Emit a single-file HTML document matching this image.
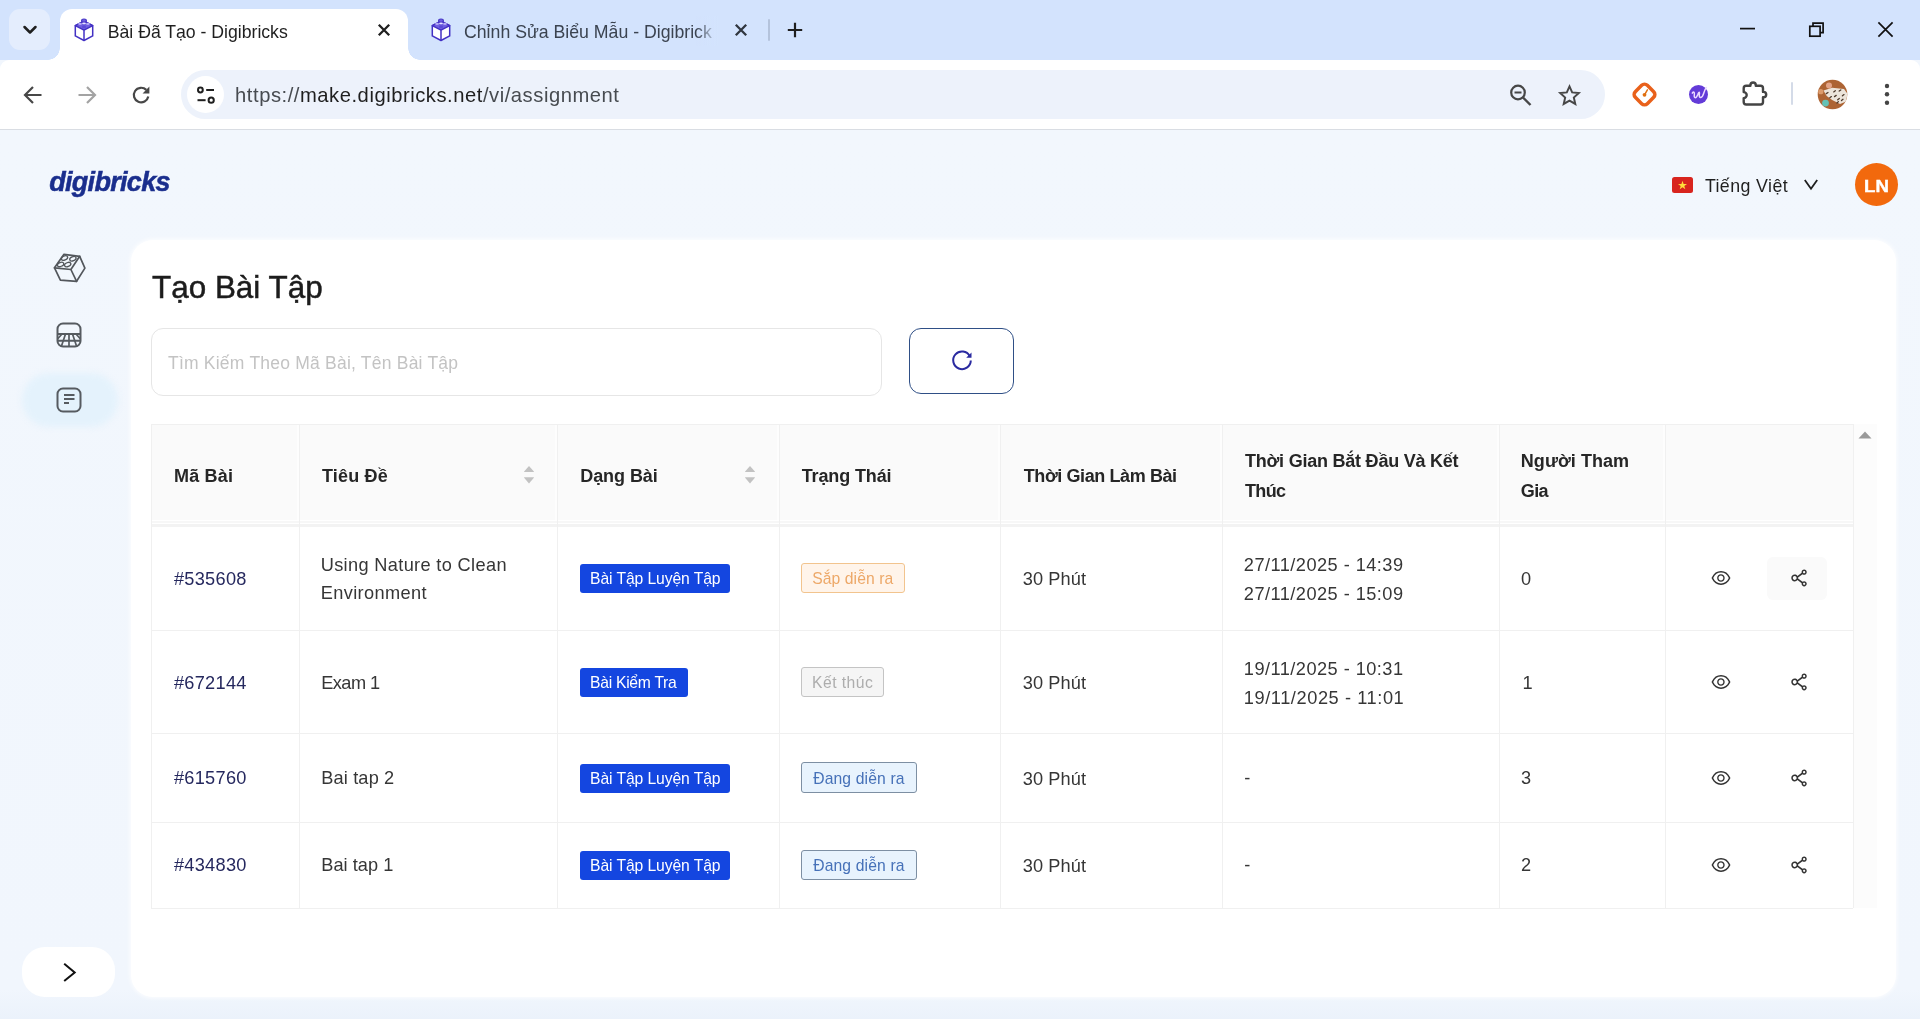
<!DOCTYPE html>
<html lang="vi">
<head>
<meta charset="utf-8">
<title>Bài Đã Tạo - Digibricks</title>
<style>
*{box-sizing:border-box;margin:0;padding:0}
html,body{width:1920px;height:1019px;overflow:hidden}
body{font-family:"Liberation Sans",sans-serif;background:#f1f6fd;position:relative;color:#333}
.abs{position:absolute}
.t{position:absolute;white-space:nowrap}
#texts{position:absolute;left:0;top:0;width:1920px;height:1019px;will-change:transform}
#tabstrip{position:absolute;left:0;top:0;width:1920px;height:60px;background:#d3e3fd}
#tabdrop{position:absolute;left:9px;top:9px;width:41px;height:41px;border-radius:11px;background:#e4edfd}
#tab1{position:absolute;left:60px;top:9px;width:348px;height:51px;background:#fff;border-radius:12px 12px 0 0}
#tab1:before,#tab1:after{content:"";position:absolute;bottom:0;width:12px;height:12px;background:radial-gradient(circle at 0 0,rgba(255,255,255,0) 11.5px,#fff 12px)}
#tab1:before{left:-12px}
#tab1:after{right:-12px;background:radial-gradient(circle at 100% 0,rgba(255,255,255,0) 11.5px,#fff 12px)}
#toolbar{position:absolute;left:0;top:60px;width:1920px;height:69px;background:#fff;border-radius:9px 9px 0 0}
#tbline{position:absolute;left:0;top:129px;width:1920px;height:1px;background:#d9dde3}
#urlbar{position:absolute;left:181px;top:70px;width:1424px;height:49px;border-radius:25px;background:#edf2fb}
#urlchip{position:absolute;left:187px;top:76px;width:37px;height:37px;border-radius:19px;background:#fff}
#page{position:absolute;left:0;top:130px;width:1920px;height:889px;background:linear-gradient(180deg,#f2f7fd 0,#f1f6fd 860px,#ebf2fb 889px)}
#avatar{position:absolute;left:1855px;top:163px;width:43px;height:43px;border-radius:22px;background:#f2690d}
#card{position:absolute;left:131px;top:240px;width:1765px;height:757px;background:#fff;border-radius:22px;box-shadow:0 0 4px 1px rgba(255,255,255,0.85)}
#search{position:absolute;left:151px;top:328px;width:731px;height:68px;border:1px solid #e6e6e6;border-radius:12px;background:#fff}
#refresh{position:absolute;left:909px;top:328px;width:105px;height:66px;border:1px solid #2f4f86;border-radius:12px;background:#fff}
#navactive{position:absolute;left:22px;top:373px;width:96px;height:54px;border-radius:27px;background:#e4f2fc;filter:blur(3px)}
#collapse{position:absolute;left:22px;top:946.5px;width:92.5px;height:50.7px;border-radius:23px;background:#fff}
#tbl{position:absolute;left:151px;top:424px;width:1702px;height:484px;background:#fff}
.hdr{position:absolute;left:0;top:0;width:1702px;height:96px;background:#fafafa}
.hb1{position:absolute;left:0;top:97px;width:1702px;height:2px;background:#f7f7f7}
.hb2{position:absolute;left:0;top:100px;width:1702px;height:3px;background:#f3f3f3}
.vl{position:absolute;top:0;width:1px;height:484px;background:#f0f0f0}
.hl{position:absolute;left:0;width:1702px;height:1px;background:#f0f0f0}
.th{font-weight:bold;font-size:17.7px;line-height:30px;color:#262626}
.td{font-size:18.2px;line-height:30px;color:#363636}
.code{color:#25285e}
.tagb{position:absolute;height:29px;border-radius:3px;background:#1446e0}
.tago{position:absolute;height:30px;border-radius:3px;border:1px solid}
.tagt{font-size:15.7px;line-height:20px}
.to{background:#fff4ea;border-color:#f2c48e}
.tg{background:#f5f5f5;border-color:#c4c4c4}
.tb{background:#e8f3fd;border-color:#7d8fa3}
.ic{position:absolute}
#sbtrack{position:absolute;left:1854px;top:424px;width:23px;height:484px;background:#fcfcfc}
</style>
</head>
<body>
<!-- backgrounds & table -->
<div id="tabstrip"></div><div id="tabdrop"></div><div id="tab1"></div>
<div id="toolbar"></div><div id="tbline"></div><div id="urlbar"></div><div id="urlchip"></div>
<div id="page"></div><div id="avatar"></div><div id="navactive"></div><div id="card"></div>
<div id="search"></div><div id="refresh"></div><div id="collapse"></div>
<div id="sbtrack"></div>
<svg class="abs" style="left:1858px;top:430px" width="14" height="10" viewBox="0 0 14 10"><path d="M7 1.500 L13.500 8.500 L0.500 8.500 Z" fill="#9a9a9a"/></svg>
<div id="tbl">
<div class="hdr"></div><div class="hb1"></div><div class="hb2"></div>
<div class="vl" style="left:0px"></div>
<div class="vl" style="left:148px"></div>
<div class="vl" style="left:406px"></div>
<div class="vl" style="left:628px"></div>
<div class="vl" style="left:849px"></div>
<div class="vl" style="left:1071px"></div>
<div class="vl" style="left:1348px"></div>
<div class="vl" style="left:1514px"></div>
<div class="vl" style="left:1702px"></div>
<div class="abs" style="left:146px;top:1px;width:2px;height:95px;background:#fdfdfd"></div>
<div class="abs" style="left:404px;top:1px;width:2px;height:95px;background:#fdfdfd"></div>
<div class="abs" style="left:626px;top:1px;width:2px;height:95px;background:#fdfdfd"></div>
<div class="abs" style="left:847px;top:1px;width:2px;height:95px;background:#fdfdfd"></div>
<div class="abs" style="left:1069px;top:1px;width:2px;height:95px;background:#fdfdfd"></div>
<div class="abs" style="left:1346px;top:1px;width:2px;height:95px;background:#fdfdfd"></div>
<div class="abs" style="left:1512px;top:1px;width:2px;height:95px;background:#fdfdfd"></div>
<div class="hl" style="top:0px"></div>
<div class="hl" style="top:206px"></div>
<div class="hl" style="top:309px"></div>
<div class="hl" style="top:398px"></div>
<div class="hl" style="top:484px"></div>
<svg class="ic" style="left:371.5px;top:40px" width="12" height="22" viewBox="0 0 12 22"><path d="M6 2 L10.900 7.500 Q11.200 8.100 10.500 8.100 L1.500 8.100 Q0.800 8.100 1.100 7.500 Z" fill="#c2c2c2"/><path d="M6 19.400 L10.900 13.800 Q11.200 13.200 10.500 13.200 L1.500 13.200 Q0.800 13.200 1.100 13.800 Z" fill="#c2c2c2"/></svg>
<svg class="ic" style="left:592.5px;top:40px" width="12" height="22" viewBox="0 0 12 22"><path d="M6 2 L10.900 7.500 Q11.200 8.100 10.500 8.100 L1.500 8.100 Q0.800 8.100 1.100 7.500 Z" fill="#c2c2c2"/><path d="M6 19.400 L10.900 13.800 Q11.200 13.200 10.500 13.200 L1.500 13.200 Q0.800 13.200 1.100 13.800 Z" fill="#c2c2c2"/></svg>
<div class="tagb" style="left:429px;top:140px;width:150px;height:29px"></div>
<div class="tagb" style="left:429px;top:244px;width:108px;height:28.5px"></div>
<div class="tagb" style="left:429px;top:340px;width:150px;height:28.5px"></div>
<div class="tagb" style="left:429px;top:427px;width:150px;height:28.700000000000045px"></div>
<div class="tago to" style="left:650px;top:139px;width:104px;height:30px"></div>
<div class="tago tg" style="left:650px;top:243px;width:83px;height:30px"></div>
<div class="tago tb" style="left:650px;top:338px;width:116px;height:30.5px"></div>
<div class="tago tb" style="left:650px;top:426px;width:116px;height:30px"></div>
<div class="abs" style="left:1616px;top:133px;width:60px;height:43px;border-radius:6px;background:#fafafa"></div>
<svg class="ic" style="left:1558.6px;top:143.20000000000005px" width="22" height="22" viewBox="0 0 1024 1024" fill="#333"><path d="M942.2 486.2C847.4 286.5 704.1 186 512 186c-192.2 0-335.4 100.5-430.2 300.3a60.3 60.3 0 000 51.5C176.6 737.5 319.9 838 512 838c192.2 0 335.400-100.500 430.200-300.300 7.700-16.200 7.700-35 0-51.500zM512 766c-161.300 0-279.400-81.800-362.700-254C232.600 339.800 350.700 258 512 258c161.300 0 279.400 81.800 362.700 254C791.500 684.200 673.400 766 512 766zm-4-430c-97.200 0-176 78.800-176 176s78.800 176 176 176 176-78.800 176-176-78.800-176-176-176zm0 288c-61.900 0-112-50.100-112-112s50.100-112 112-112 112 50.100 112 112-50.100 112-112 112z"/></svg>
<svg class="ic" style="left:1636.6px;top:143.20000000000005px" width="22" height="22" viewBox="0 0 1024 1024" fill="#333"><path d="M752 664c-28.500 0-54.800 10-75.400 26.700L469.400 540.800a160.680 160.680 0 000-57.600l207.200-149.900C697.200 350 723.500 360 752 360c66.200 0 120-53.800 120-120s-53.800-120-120-120-120 53.800-120 120c0 11.600 1.600 22.700 4.700 33.300L439.900 415.800C410.700 377.100 364.300 352 312 352c-88.400 0-160 71.600-160 160s71.600 160 160 160c52.300 0 98.700-25.100 127.900-63.800l196.800 142.500c-3.100 10.600-4.700 21.800-4.700 33.300 0 66.200 53.800 120 120 120s120-53.800 120-120-53.800-120-120-120zm0-476c28.700 0 52 23.300 52 52s-23.300 52-52 52-52-23.300-52-52 23.300-52 52-52zM312 600c-48.500 0-88-39.500-88-88s39.500-88 88-88 88 39.500 88 88-39.500 88-88 88zm440 236c-28.700 0-52-23.300-52-52s23.300-52 52-52 52 23.300 52 52-23.300 52-52 52z"/></svg>
<svg class="ic" style="left:1558.6px;top:247.20000000000005px" width="22" height="22" viewBox="0 0 1024 1024" fill="#333"><path d="M942.2 486.2C847.4 286.5 704.1 186 512 186c-192.2 0-335.4 100.5-430.2 300.3a60.3 60.3 0 000 51.5C176.6 737.5 319.9 838 512 838c192.2 0 335.400-100.500 430.200-300.300 7.700-16.200 7.700-35 0-51.500zM512 766c-161.300 0-279.400-81.800-362.700-254C232.600 339.800 350.700 258 512 258c161.300 0 279.400 81.800 362.700 254C791.500 684.200 673.400 766 512 766zm-4-430c-97.200 0-176 78.800-176 176s78.800 176 176 176 176-78.800 176-176-78.800-176-176-176zm0 288c-61.900 0-112-50.100-112-112s50.100-112 112-112 112 50.100 112 112-50.100 112-112 112z"/></svg>
<svg class="ic" style="left:1636.6px;top:247.20000000000005px" width="22" height="22" viewBox="0 0 1024 1024" fill="#333"><path d="M752 664c-28.500 0-54.800 10-75.400 26.700L469.400 540.800a160.680 160.680 0 000-57.600l207.200-149.900C697.200 350 723.500 360 752 360c66.200 0 120-53.800 120-120s-53.800-120-120-120-120 53.800-120 120c0 11.600 1.600 22.700 4.700 33.300L439.900 415.800C410.700 377.100 364.300 352 312 352c-88.400 0-160 71.600-160 160s71.600 160 160 160c52.300 0 98.700-25.100 127.900-63.800l196.800 142.500c-3.100 10.600-4.700 21.800-4.700 33.300 0 66.200 53.800 120 120 120s120-53.800 120-120-53.800-120-120-120zm0-476c28.700 0 52 23.300 52 52s-23.300 52-52 52-52-23.300-52-52 23.300-52 52-52zM312 600c-48.500 0-88-39.500-88-88s39.500-88 88-88 88 39.500 88 88-39.500 88-88 88zm440 236c-28.700 0-52-23.300-52-52s23.300-52 52-52 52 23.300 52 52-23.300 52-52 52z"/></svg>
<svg class="ic" style="left:1558.6px;top:342.70000000000005px" width="22" height="22" viewBox="0 0 1024 1024" fill="#333"><path d="M942.2 486.2C847.4 286.5 704.1 186 512 186c-192.2 0-335.4 100.5-430.2 300.3a60.3 60.3 0 000 51.5C176.6 737.5 319.9 838 512 838c192.2 0 335.400-100.500 430.200-300.300 7.700-16.200 7.700-35 0-51.500zM512 766c-161.300 0-279.400-81.800-362.700-254C232.600 339.800 350.700 258 512 258c161.300 0 279.400 81.800 362.700 254C791.500 684.200 673.400 766 512 766zm-4-430c-97.200 0-176 78.800-176 176s78.800 176 176 176 176-78.800 176-176-78.800-176-176-176zm0 288c-61.900 0-112-50.100-112-112s50.100-112 112-112 112 50.100 112 112-50.100 112-112 112z"/></svg>
<svg class="ic" style="left:1636.6px;top:342.70000000000005px" width="22" height="22" viewBox="0 0 1024 1024" fill="#333"><path d="M752 664c-28.500 0-54.800 10-75.400 26.700L469.400 540.800a160.680 160.680 0 000-57.600l207.200-149.900C697.200 350 723.500 360 752 360c66.200 0 120-53.800 120-120s-53.800-120-120-120-120 53.800-120 120c0 11.600 1.600 22.700 4.700 33.300L439.900 415.800C410.700 377.100 364.300 352 312 352c-88.400 0-160 71.600-160 160s71.600 160 160 160c52.300 0 98.700-25.100 127.900-63.800l196.800 142.500c-3.100 10.600-4.700 21.800-4.700 33.300 0 66.200 53.800 120 120 120s120-53.800 120-120-53.800-120-120-120zm0-476c28.700 0 52 23.300 52 52s-23.300 52-52 52-52-23.300-52-52 23.300-52 52-52zM312 600c-48.500 0-88-39.500-88-88s39.500-88 88-88 88 39.500 88 88-39.500 88-88 88zm440 236c-28.700 0-52-23.300-52-52s23.300-52 52-52 52 23.300 52 52-23.300 52-52 52z"/></svg>
<svg class="ic" style="left:1558.6px;top:430px" width="22" height="22" viewBox="0 0 1024 1024" fill="#333"><path d="M942.2 486.2C847.4 286.5 704.1 186 512 186c-192.2 0-335.4 100.5-430.2 300.3a60.3 60.3 0 000 51.5C176.6 737.5 319.9 838 512 838c192.2 0 335.400-100.500 430.200-300.300 7.700-16.200 7.700-35 0-51.500zM512 766c-161.300 0-279.400-81.800-362.700-254C232.600 339.800 350.700 258 512 258c161.300 0 279.400 81.800 362.700 254C791.500 684.200 673.400 766 512 766zm-4-430c-97.200 0-176 78.800-176 176s78.800 176 176 176 176-78.800 176-176-78.800-176-176-176zm0 288c-61.900 0-112-50.100-112-112s50.100-112 112-112 112 50.100 112 112-50.100 112-112 112z"/></svg>
<svg class="ic" style="left:1636.6px;top:430px" width="22" height="22" viewBox="0 0 1024 1024" fill="#333"><path d="M752 664c-28.500 0-54.800 10-75.400 26.700L469.400 540.800a160.680 160.680 0 000-57.600l207.200-149.900C697.200 350 723.500 360 752 360c66.200 0 120-53.800 120-120s-53.800-120-120-120-120 53.800-120 120c0 11.600 1.600 22.700 4.700 33.300L439.900 415.800C410.700 377.100 364.300 352 312 352c-88.400 0-160 71.600-160 160s71.600 160 160 160c52.300 0 98.700-25.100 127.900-63.800l196.800 142.500c-3.100 10.600-4.700 21.800-4.700 33.300 0 66.200 53.800 120 120 120s120-53.800 120-120-53.800-120-120-120zm0-476c28.700 0 52 23.300 52 52s-23.300 52-52 52-52-23.300-52-52 23.300-52 52-52zM312 600c-48.500 0-88-39.500-88-88s39.500-88 88-88 88 39.500 88 88-39.500 88-88 88zm440 236c-28.700 0-52-23.300-52-52s23.300-52 52-52 52 23.300 52 52-23.300 52-52 52z"/></svg>
</div>
<!-- texts -->
<div id="texts">
<div class="t" style="left:107.75px;top:16.87px;font-size:17.7px;line-height:30px;letter-spacing:-0.023px;color:#1f1f1f">Bài Đã Tạo - Digibricks</div>
<div class="t" style="left:464.00px;top:16.87px;font-size:17.7px;line-height:30px;letter-spacing:0.000px;color:#3b4350">Chỉnh Sửa Biểu Mẫu - Digibrick</div>
<div class="t" style="left:235.10px;top:80.00px;font-size:20.2px;line-height:30px;letter-spacing:0.535px;color:#1f1f1f"><span style="color:#474b50">https://</span>make.digibricks.net<span style="color:#474b50">/vi/assignment</span></div>
<div class="t" style="left:49.20px;top:167.44px;font-size:27px;line-height:30px;letter-spacing:-0.689px;font-weight:bold;font-style:italic;color:#1a2e8d;-webkit-text-stroke:0.5px #1a2e8d">digibricks</div>
<div class="t" style="left:1704.90px;top:170.63px;font-size:17.8px;line-height:30px;letter-spacing:0.411px;color:#1f1f1f">Tiếng Việt</div>
<div class="t" style="left:1864.37px;top:170.78px;font-size:16.5px;line-height:30px;letter-spacing:0.000px;font-weight:bold;color:#fff;-webkit-text-stroke:0.4px #fff;transform-origin:0 50%;transform:scaleX(1.1300)">LN</div>
<div class="t" style="left:152.00px;top:272.87px;font-size:31.4px;line-height:30px;letter-spacing:0.025px;color:#1c1c1c;-webkit-text-stroke:0.5px #1c1c1c">Tạo Bài Tập</div>
<div class="t" style="left:168.00px;top:347.69px;font-size:17.5px;line-height:30px;letter-spacing:0.219px;color:#c3c3c3">Tìm Kiếm Theo Mã Bài, Tên Bài Tập</div>
<div class="t" style="left:174.00px;top:460.66px;font-size:18px;line-height:30px;letter-spacing:0.200px;font-weight:bold;color:#262626">Mã Bài</div>
<div class="t" style="left:322.00px;top:460.66px;font-size:18px;line-height:30px;letter-spacing:0.167px;font-weight:bold;color:#262626">Tiêu Đề</div>
<div class="t" style="left:580.25px;top:460.66px;font-size:18px;line-height:30px;letter-spacing:-0.071px;font-weight:bold;color:#262626">Dạng Bài</div>
<div class="t" style="left:801.75px;top:460.66px;font-size:18px;line-height:30px;letter-spacing:-0.139px;font-weight:bold;color:#262626">Trạng Thái</div>
<div class="t" style="left:1023.75px;top:460.66px;font-size:18px;line-height:30px;letter-spacing:-0.406px;font-weight:bold;color:#262626">Thời Gian Làm Bài</div>
<div class="t" style="left:1245.00px;top:445.51px;font-size:18px;line-height:30px;letter-spacing:-0.228px;font-weight:bold;color:#262626">Thời Gian Bắt Đầu Và Kết</div>
<div class="t" style="left:1245.00px;top:475.51px;font-size:18px;line-height:30px;letter-spacing:-0.667px;font-weight:bold;color:#262626">Thúc</div>
<div class="t" style="left:1520.80px;top:445.51px;font-size:18px;line-height:30px;letter-spacing:0.044px;font-weight:bold;color:#262626">Người Tham</div>
<div class="t" style="left:1520.80px;top:475.51px;font-size:18px;line-height:30px;letter-spacing:-0.650px;font-weight:bold;color:#262626">Gia</div>
<div class="t" style="left:173.90px;top:563.89px;font-size:18.2px;line-height:30px;letter-spacing:0.283px;color:#25285e">#535608</div>
<div class="t" style="left:320.70px;top:549.79px;font-size:18.2px;line-height:30px;letter-spacing:0.345px;color:#363636">Using Nature to Clean</div>
<div class="t" style="left:320.70px;top:578.29px;font-size:18.2px;line-height:30px;letter-spacing:0.380px;color:#363636">Environment</div>
<div class="t" style="left:590.00px;top:564.36px;font-size:15.7px;line-height:30px;letter-spacing:-0.087px;color:#fff">Bài Tập Luyện Tập</div>
<div class="t" style="left:812.20px;top:564.36px;font-size:15.7px;line-height:30px;letter-spacing:0.080px;color:#eda868">Sắp diễn ra</div>
<div class="t" style="left:1022.70px;top:564.19px;font-size:18.2px;line-height:30px;letter-spacing:0.117px;color:#363636">30 Phút</div>
<div class="t" style="left:1243.80px;top:549.89px;font-size:18.2px;line-height:30px;letter-spacing:0.465px;color:#363636">27/11/2025 - 14:39</div>
<div class="t" style="left:1243.80px;top:578.89px;font-size:18.2px;line-height:30px;letter-spacing:0.465px;color:#363636">27/11/2025 - 15:09</div>
<div class="t" style="left:1521.00px;top:563.89px;font-size:18.2px;line-height:30px;letter-spacing:0.000px;color:#363636">0</div>
<div class="t" style="left:173.90px;top:667.59px;font-size:18.2px;line-height:30px;letter-spacing:0.283px;color:#25285e">#672144</div>
<div class="t" style="left:321.30px;top:667.59px;font-size:18.2px;line-height:30px;letter-spacing:-0.580px;color:#363636">Exam 1</div>
<div class="t" style="left:590.00px;top:668.06px;font-size:15.7px;line-height:30px;letter-spacing:-0.273px;color:#fff">Bài Kiểm Tra</div>
<div class="t" style="left:812.00px;top:668.06px;font-size:15.7px;line-height:30px;letter-spacing:0.471px;color:#adadad">Kết thúc</div>
<div class="t" style="left:1022.70px;top:667.89px;font-size:18.2px;line-height:30px;letter-spacing:0.117px;color:#363636">30 Phút</div>
<div class="t" style="left:1243.80px;top:653.59px;font-size:18.2px;line-height:30px;letter-spacing:0.465px;color:#363636">19/11/2025 - 10:31</div>
<div class="t" style="left:1243.80px;top:682.59px;font-size:18.2px;line-height:30px;letter-spacing:0.582px;color:#363636">19/11/2025 - 11:01</div>
<div class="t" style="left:1522.50px;top:667.59px;font-size:18.2px;line-height:30px;letter-spacing:0.000px;color:#363636">1</div>
<div class="t" style="left:173.90px;top:763.49px;font-size:18.2px;line-height:30px;letter-spacing:0.283px;color:#25285e">#615760</div>
<div class="t" style="left:321.30px;top:763.49px;font-size:18.2px;line-height:30px;letter-spacing:0.137px;color:#363636">Bai tap 2</div>
<div class="t" style="left:590.00px;top:763.96px;font-size:15.7px;line-height:30px;letter-spacing:-0.087px;color:#fff">Bài Tập Luyện Tập</div>
<div class="t" style="left:813.20px;top:763.96px;font-size:15.7px;line-height:30px;letter-spacing:0.136px;color:#4671b8">Đang diễn ra</div>
<div class="t" style="left:1022.70px;top:763.79px;font-size:18.2px;line-height:30px;letter-spacing:0.117px;color:#363636">30 Phút</div>
<div class="t" style="left:1244.30px;top:763.49px;font-size:18.2px;line-height:30px;letter-spacing:0.000px;color:#363636">-</div>
<div class="t" style="left:1521.00px;top:763.49px;font-size:18.2px;line-height:30px;letter-spacing:0.000px;color:#363636">3</div>
<div class="t" style="left:173.90px;top:850.39px;font-size:18.2px;line-height:30px;letter-spacing:0.283px;color:#25285e">#434830</div>
<div class="t" style="left:321.30px;top:850.39px;font-size:18.2px;line-height:30px;letter-spacing:0.025px;color:#363636">Bai tap 1</div>
<div class="t" style="left:590.00px;top:850.86px;font-size:15.7px;line-height:30px;letter-spacing:-0.087px;color:#fff">Bài Tập Luyện Tập</div>
<div class="t" style="left:813.20px;top:850.86px;font-size:15.7px;line-height:30px;letter-spacing:0.136px;color:#4671b8">Đang diễn ra</div>
<div class="t" style="left:1022.70px;top:850.69px;font-size:18.2px;line-height:30px;letter-spacing:0.117px;color:#363636">30 Phút</div>
<div class="t" style="left:1244.30px;top:850.39px;font-size:18.2px;line-height:30px;letter-spacing:0.000px;color:#363636">-</div>
<div class="t" style="left:1521.00px;top:850.39px;font-size:18.2px;line-height:30px;letter-spacing:0.000px;color:#363636">2</div>
</div>
<!-- icons -->
<svg class="abs" style="left:22px;top:22px" width="16" height="16" viewBox="0 0 16 16"><path d="M2.500 5 L8 10.500 L13.500 5" stroke="#1f1f1f" stroke-width="2.500" fill="none" stroke-linecap="round" stroke-linejoin="round"/></svg>
<svg class="abs" style="left:72.2px;top:17px" width="24" height="26" viewBox="0 0 24 26"><path d="M12 4.200 L20.700 8.600 L20.700 18.900 L12 23.500 L3.300 18.900 L3.300 8.600 Z" fill="#fff" stroke="#4331c4" stroke-width="1.500" stroke-linejoin="round"/><path d="M3.300 8.600 L12 13.200 L20.700 8.600 L12 4.200 Z" fill="#6f5fe0" stroke="#4331c4" stroke-width="1.500" stroke-linejoin="round"/><path d="M12 13.200 L12 23.500" stroke="#4331c4" stroke-width="1.500"/><ellipse cx="12" cy="3.700" rx="2.400" ry="1.700" fill="#6f5fe0" stroke="#4331c4" stroke-width="1.100"/><ellipse cx="8" cy="6.900" rx="1.900" ry="1.100" fill="#b3a9f5"/><ellipse cx="16" cy="6.900" rx="1.900" ry="1.100" fill="#b3a9f5"/><ellipse cx="12" cy="6.300" rx="1.900" ry="0.900" fill="#e6e2ff"/><ellipse cx="12" cy="9.800" rx="2.100" ry="1.500" fill="#5a49d6"/></svg>
<svg class="abs" style="left:429.2px;top:17px" width="24" height="26" viewBox="0 0 24 26"><path d="M12 4.200 L20.700 8.600 L20.700 18.900 L12 23.500 L3.300 18.900 L3.300 8.600 Z" fill="#fff" stroke="#4331c4" stroke-width="1.500" stroke-linejoin="round"/><path d="M3.300 8.600 L12 13.200 L20.700 8.600 L12 4.200 Z" fill="#6f5fe0" stroke="#4331c4" stroke-width="1.500" stroke-linejoin="round"/><path d="M12 13.200 L12 23.500" stroke="#4331c4" stroke-width="1.500"/><ellipse cx="12" cy="3.700" rx="2.400" ry="1.700" fill="#6f5fe0" stroke="#4331c4" stroke-width="1.100"/><ellipse cx="8" cy="6.900" rx="1.900" ry="1.100" fill="#b3a9f5"/><ellipse cx="16" cy="6.900" rx="1.900" ry="1.100" fill="#b3a9f5"/><ellipse cx="12" cy="6.300" rx="1.900" ry="0.900" fill="#e6e2ff"/><ellipse cx="12" cy="9.800" rx="2.100" ry="1.500" fill="#5a49d6"/></svg>
<svg class="abs" style="left:375.9px;top:22.3px" width="16" height="16" viewBox="0 0 16 16"><path d="M2.8 2.8 L13.2 13.2 M13.2 2.8 L2.8 13.2" stroke="#1f1f1f" stroke-width="2.3" fill="none"/></svg>
<svg class="abs" style="left:733px;top:22.4px" width="16" height="16" viewBox="0 0 16 16"><path d="M2.8 2.8 L13.2 13.2 M13.2 2.8 L2.8 13.2" stroke="#30363f" stroke-width="2.3" fill="none"/></svg>
<div class="abs" style="left:696px;top:16px;width:22px;height:30px;background:linear-gradient(90deg,rgba(211,227,253,0),#d3e3fd)"></div>
<div class="abs" style="left:768px;top:19px;width:2px;height:22px;background:#b4c3dc;border-radius:1px"></div>
<svg class="abs" style="left:787px;top:22px" width="16" height="16" viewBox="0 0 16 16"><path d="M8 0.800 V15.200 M0.800 8 H15.200" stroke="#1f1f1f" stroke-width="2.200" fill="none"/></svg>
<svg class="abs" style="left:1738px;top:24px" width="20" height="10" viewBox="0 0 20 10"><path d="M2 4.600 H17" stroke="#111" stroke-width="1.700" fill="none"/></svg>
<svg class="abs" style="left:1808px;top:21px" width="17" height="17" viewBox="0 0 17 17"><rect x="1.800" y="5.300" width="10.300" height="9.900" fill="none" stroke="#111" stroke-width="1.700"/><path d="M5 5.300 V2.200 H15.100 V11.700 H12.100" fill="none" stroke="#111" stroke-width="1.700"/></svg>
<svg class="abs" style="left:1876px;top:20px" width="18" height="18" viewBox="0 0 18 18"><path d="M2.400 2.400 L16.600 16.600 M16.600 2.400 L2.400 16.600" stroke="#111" stroke-width="1.700" fill="none"/></svg>
<svg class="abs" style="left:23.200000000000003px;top:85px" width="20" height="20" viewBox="0 0 20 20"><g ><path d="M18.500 10 H2.500 M10 2 L2 10 L10 18" stroke="#474747" stroke-width="2.200" fill="none" stroke-linejoin="miter"/></g></svg>
<svg class="abs" style="left:76.8px;top:85px" width="20" height="20" viewBox="0 0 20 20"><g transform="translate(20 0) scale(-1 1)"><path d="M18.500 10 H2.500 M10 2 L2 10 L10 18" stroke="#a3a3a3" stroke-width="2.200" fill="none" stroke-linejoin="miter"/></g></svg>
<svg class="abs" style="left:131px;top:85px" width="20" height="20" viewBox="0 0 20 20"><path d="M17.300 11.500 A7.300 7.300 0 1 1 15.300 4.900" stroke="#474747" stroke-width="2.200" fill="none"/><path d="M18.400 1.600 V8.400 H11.600 Z" fill="#474747"/></svg>
<svg class="abs" style="left:195px;top:85px" width="22" height="20" viewBox="0 0 22 20"><circle cx="5.400" cy="5" r="2.400" fill="none" stroke="#1f1f1f" stroke-width="2"/><path d="M11.200 5 H19" stroke="#1f1f1f" stroke-width="2"/><circle cx="16.200" cy="15.200" r="2.600" fill="none" stroke="#1f1f1f" stroke-width="2"/><path d="M2.500 15.200 H10.600" stroke="#1f1f1f" stroke-width="2"/></svg>
<svg class="abs" style="left:1508px;top:83px" width="24" height="24" viewBox="0 0 24 24"><circle cx="10" cy="9.500" r="6.800" fill="none" stroke="#474747" stroke-width="2.200"/><path d="M15 14.500 L22.500 22" stroke="#474747" stroke-width="2.400"/><path d="M6.500 9.500 H13.500" stroke="#474747" stroke-width="2"/></svg>
<svg class="abs" style="left:1557px;top:82.6px" width="25" height="24" viewBox="0 0 25 24"><path transform="translate(12.500 12.300) scale(0.920) translate(-12.500 -12.300)" d="M12.500 2.600 L15.400 9.200 L22.600 9.900 L17.200 14.700 L18.800 21.700 L12.500 18 L6.200 21.700 L7.800 14.700 L2.400 9.900 L9.600 9.200 Z" fill="none" stroke="#474747" stroke-width="2.100" stroke-linejoin="miter"/></svg>
<svg class="abs" style="left:1630.7px;top:80.8px" width="27" height="27" viewBox="0 0 27 27"><g transform="rotate(45 13.5 13.5)"><rect x="5" y="5" width="17" height="17" rx="4" fill="#fff" stroke="#e9611b" stroke-width="3.500"/></g><circle cx="13.500" cy="13.800" r="1.900" fill="#e07010"/><path d="M13.500 13.800 L16.400 8.900" stroke="#e07010" stroke-width="1.500" stroke-linecap="round"/></svg>
<svg class="abs" style="left:1688.1px;top:83.8px" width="21" height="21" viewBox="0 0 21 21"><circle cx="10.500" cy="10.500" r="9.500" fill="#633bd8"/><path d="M4.300 9.200 C5.300 7.200 6.800 8 6.300 11 C5.800 14.500 8.200 14.800 9.800 10.500 C10.800 7.500 11.800 7.500 11.300 10.500 C10.800 14.800 14.200 14.800 15.800 9 C16.600 6 17.500 4.500 18.300 3.500" fill="none" stroke="#ecd9ff" stroke-width="1.500" stroke-linecap="round"/></svg>
<svg class="abs" style="left:1741px;top:80px" width="28" height="28" viewBox="0 0 28 28"><path d="M5.200 5.800 H9.400 V5.200 A2.700 2.700 0 0 1 14.800 5.200 V5.800 H19.500 Q22 5.800 22 8.300 V11.900 H22.500 A2.700 2.700 0 0 1 22.500 17.300 H22 V22 Q22 24.500 19.500 24.500 H5.200 Q2.700 24.500 2.700 22 V18.100 A3 3 0 0 0 2.700 12.100 V8.300 Q2.700 5.800 5.200 5.800 Z" fill="none" stroke="#444" stroke-width="2.400" stroke-linejoin="round"/></svg>
<div class="abs" style="left:1791px;top:82px;width:2px;height:23px;background:#d4dbe8;border-radius:1px"></div>
<svg class="abs" style="left:1817.3px;top:79.2px" width="31" height="31" viewBox="0 0 31 31"><defs><clipPath id="pc"><circle cx="15.500" cy="15.500" r="14.800"/></clipPath></defs><g clip-path="url(#pc)"><rect width="31" height="31" fill="#ad6434"/><circle cx="12" cy="6.500" r="3" fill="#e3a488"/><circle cx="3.800" cy="12.700" r="2.600" fill="#dc9b6c"/><circle cx="8.500" cy="24.100" r="3.400" fill="#63c2b6"/><path d="M6.500 11.500 L15.200 8.800 L27 9.900 L30.300 14.600 L29.300 22.500 L23 24.900 L15.200 20.900 L9.700 17 Z" fill="#ece4da"/><path d="M9.300 14.600 L11 13.500 M12.800 18.800 L14.400 17.600 M17.500 17.600 L19.200 16.400 M20.700 20.800 L22.300 19.400 M20 24 L21.400 22.600 M25.400 16.800 L27 15.600 M22.200 12.100 L23.800 10.900 M16.700 12.900 L18.300 11.700 M24.500 21.500 L26 20.300" stroke="#4e3a2c" stroke-width="1.300" stroke-linecap="round"/></g></svg>
<svg class="abs" style="left:1883.2px;top:83.4px" width="8" height="23" viewBox="0 0 8 23"><circle cx="4" cy="3" r="2.200" fill="#444"/><circle cx="4" cy="11.300" r="2.200" fill="#444"/><circle cx="4" cy="19.700" r="2.200" fill="#444"/></svg>
<svg class="abs" style="left:1672px;top:177px" width="21" height="16" viewBox="0 0 21 16"><rect width="21" height="16" rx="2.500" fill="#d8241e"/><path d="M10.500 3.800 L11.600 7 L15 7 L12.300 9 L13.300 12.200 L10.500 10.300 L7.700 12.200 L8.700 9 L6 7 L9.400 7 Z" fill="#ffdc3a"/></svg>
<svg class="abs" style="left:1803px;top:178px" width="16" height="13" viewBox="0 0 16 13"><path d="M1.800 2 L8 10.800 L14.200 2" stroke="#1f1f1f" stroke-width="1.800" fill="none"/></svg>
<svg class="abs" style="left:52px;top:251px" width="36" height="34" viewBox="0 0 36 34"><g fill="none" stroke="#53575c" stroke-width="1.700" stroke-linejoin="round" stroke-linecap="round"><path d="M2.500 16.800 L12 3.300 L27.700 5.300 L32.900 17.100 L24.600 30.300 L8.400 29.100 Z"/><path d="M2.500 16.800 L18.900 18.500 L27.700 5.300 M18.900 18.500 L24.600 30.300"/><ellipse cx="12.500" cy="7" rx="3.300" ry="2" transform="rotate(-22 12.500 7)" stroke-width="1.300"/><ellipse cx="20.900" cy="7.700" rx="3.300" ry="2" transform="rotate(-22 20.900 7.700)" stroke-width="1.300"/><ellipse cx="8.600" cy="13.400" rx="3.300" ry="2" transform="rotate(-22 8.600 13.400)" stroke-width="1.300"/><ellipse cx="15.700" cy="13.600" rx="3.300" ry="2" transform="rotate(-22 15.700 13.600)" stroke-width="1.300"/></g></svg>
<svg class="abs" style="left:56px;top:322px" width="26" height="26" viewBox="0 0 26 26"><g fill="none" stroke="#565b60" stroke-width="2" stroke-linejoin="round"><rect x="1.500" y="1.500" width="23" height="23" rx="5.500"/><path d="M1.500 12 H24.500 M2 18.800 H24"/><path d="M9.500 12 L5.500 24 M13 12 V24 M16.500 12 L20.500 24 M6 12 L1.500 17 M20 12 L24.500 17" stroke-width="1.700"/></g></svg>
<svg class="abs" style="left:56px;top:387px" width="26" height="26" viewBox="0 0 26 26"><g fill="none" stroke="#565b60" stroke-width="2"><rect x="1.500" y="1.500" width="23" height="23" rx="5.500"/><path d="M8 8 H18.500 M8 12 H18.500 M8 16 H13"/></g></svg>
<svg class="abs" style="left:950px;top:348px" width="24" height="24" viewBox="0 0 24 24"><path d="M19.800 8.200 A8.800 8.800 0 1 0 20.800 12.500" stroke="#2a2aa0" stroke-width="2" fill="none"/><path d="M21.500 4.500 V9.800 H16.200 Z" fill="#2a2aa0"/></svg>
<svg class="abs" style="left:60px;top:961px" width="18" height="22" viewBox="0 0 18 22"><path d="M4.200 2.700 L14.700 11.400 L4.200 20.100" stroke="#111" stroke-width="2" fill="none"/></svg>
</body>
</html>
